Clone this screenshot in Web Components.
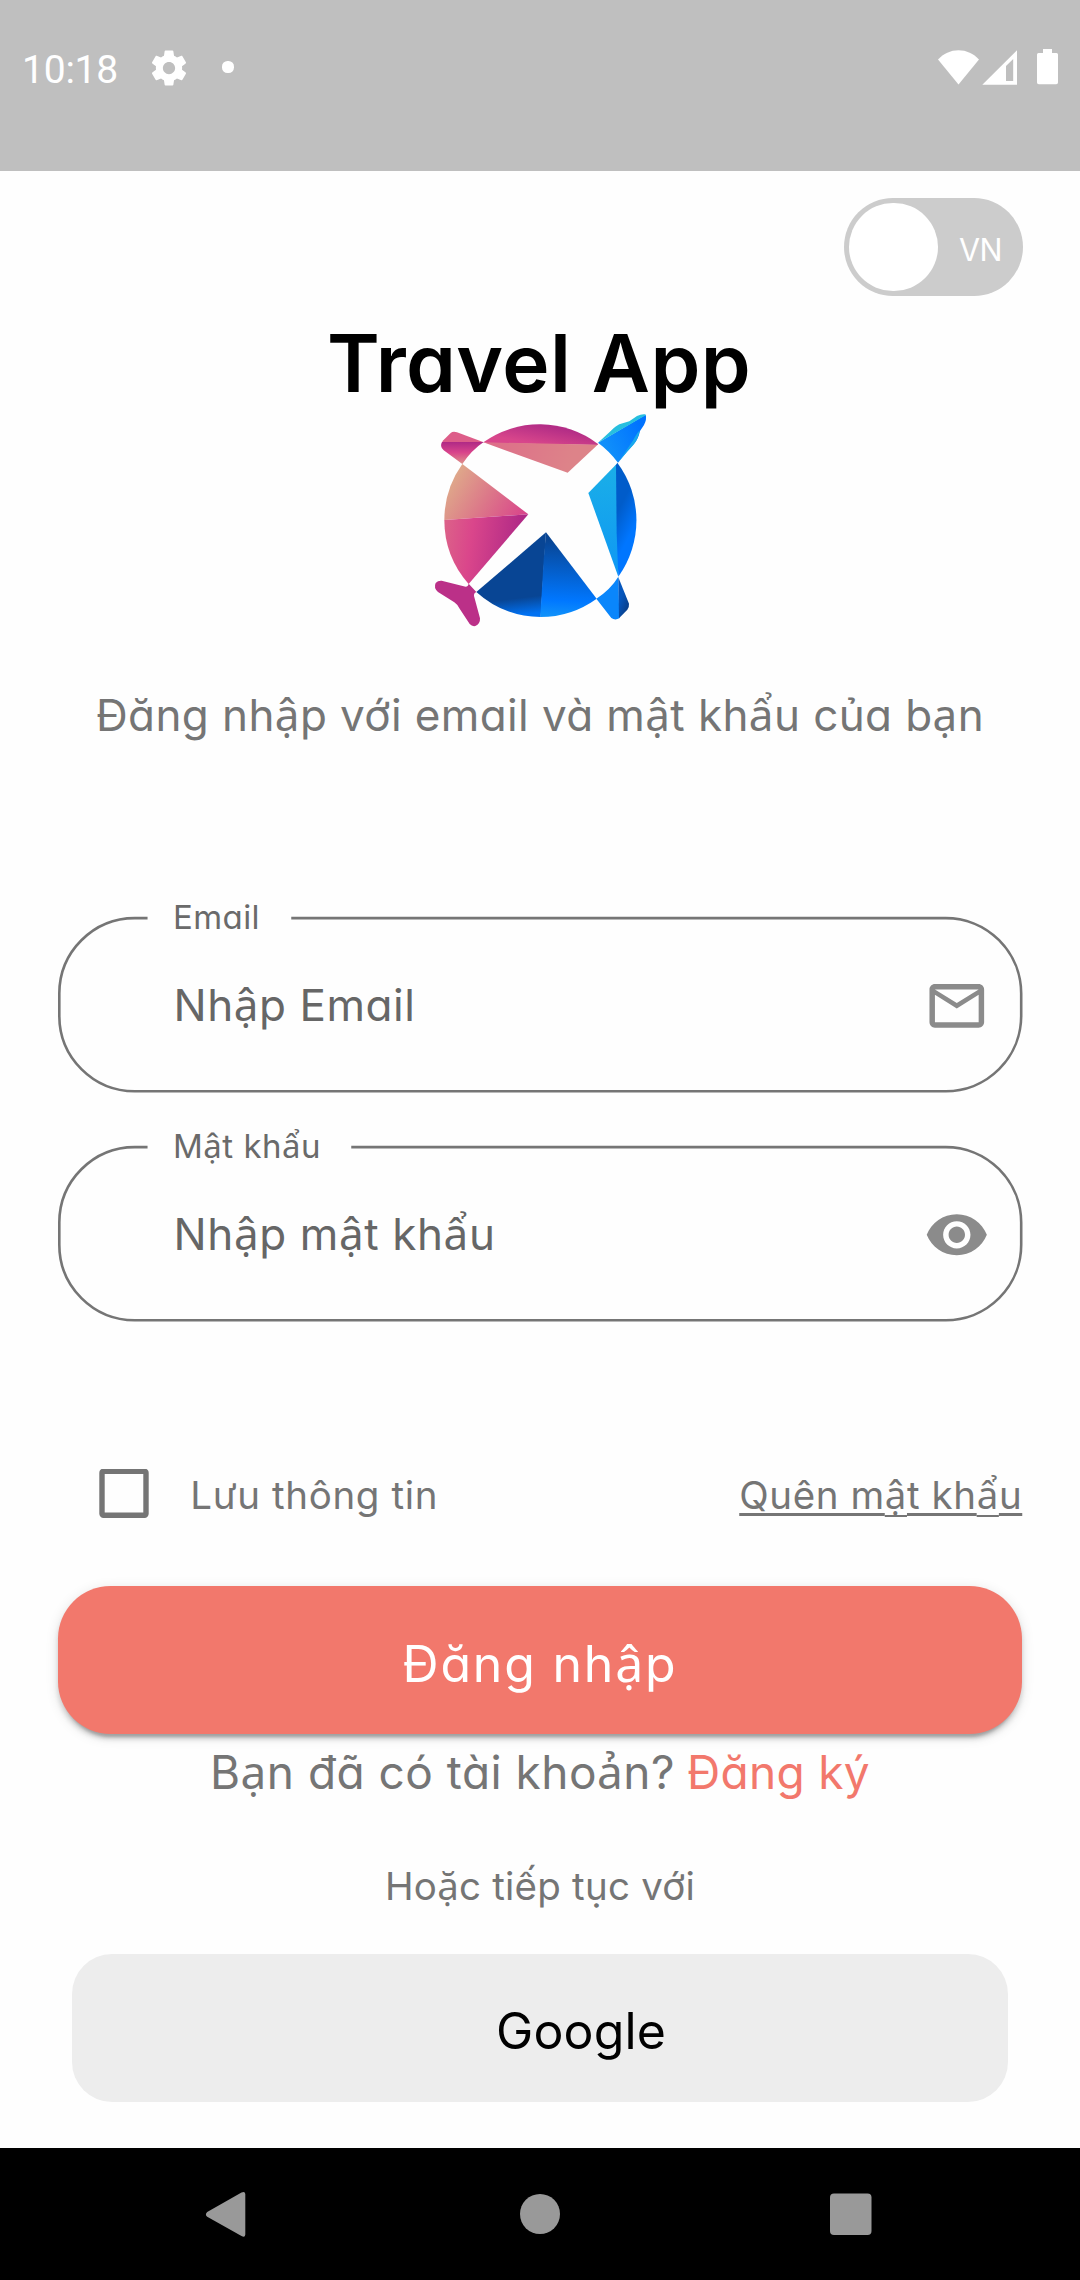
<!DOCTYPE html>
<html lang="vi">
<head>
<meta charset="utf-8">
<title>Travel App</title>
<style>
html,body{margin:0;padding:0}
body{background:#fefefe;font-family:Inter,"Noto Sans",sans-serif;color:#757575;overflow:hidden}
</style>
</head>
<body>
<login-screen></login-screen>
<script>
const define = (name, html, init) => {
  const t = document.createElement('template');
  t.innerHTML = html;
  customElements.define(name, class extends HTMLElement {
    connectedCallback() {
      if (this.shadowRoot) return;
      const root = this.attachShadow({ mode: 'open' });
      root.appendChild(t.content.cloneNode(true));
      if (init) init(this, root);
    }
  });
};

/* A single line of type, tracked so that its advance equals the "w" attribute. */
define('app-text', `
<style>
:host{display:block;flex:none;white-space:nowrap;line-height:1.36}
.line{display:inline-block;white-space:pre;font-feature-settings:"cv11" 1;font-kerning:normal}
.alt{font-family:"Noto Sans",sans-serif;line-height:0}
:host([underline]) .line{text-decoration:underline;text-decoration-thickness:2.6px;text-underline-offset:4px;text-decoration-skip-ink:none}
:host([underline]) .alt{display:inline-block;text-decoration:underline;text-decoration-thickness:2px;text-underline-offset:6px;text-decoration-skip-ink:none}
</style><span class="line"></span>`, (el, root) => {
  const line = root.querySelector('.line');
  const text = el.getAttribute('text');
  for (const part of text.split(/([ậẩạảặ])/)) {
    if (/^[ậẩạảặ]$/.test(part)) {
      const s = document.createElement('span');
      s.className = 'alt';
      s.textContent = part;
      line.append(s);
    } else line.append(part);
  }
  const w = parseFloat(el.getAttribute('w'));
  const gap = (w - line.getBoundingClientRect().width) / text.length;
  line.style.letterSpacing = gap.toFixed(3) + 'px';
});

define('status-bar', `
<style>
:host{display:flex;flex:none;height:171px;box-sizing:border-box;padding:37px 20px 0 22px;background:#bfbfbf;color:#fff;align-items:flex-start}
.time{font:39px/60px Roboto,sans-serif;padding-top:3px;width:120px}
svg{display:block;flex:none}
.gear{margin:9.5px 0 0 5.500px}
.dot{width:12px;height:12px;border-radius:5.5px;background:#fff;margin:24px 0 0 32px}
.sys{margin-left:auto;margin-top:9px}
</style>
<app-text class="time" text="10:18" w="96"></app-text>
<svg class="gear" width="42" height="42" viewBox="0 0 24 24" fill="#fff"><path d="M19.43 12.98c.04-.32.07-.64.07-.98s-.03-.66-.07-.98l2.11-1.65c.19-.15.24-.42.12-.64l-2-3.46c-.12-.22-.39-.3-.61-.22l-2.49 1c-.52-.4-1.08-.73-1.69-.98l-.38-2.65C14.46 2.18 14.25 2 14 2h-4c-.25 0-.46.18-.49.42l-.38 2.65c-.61.25-1.17.59-1.69.98l-2.49-1c-.23-.09-.49 0-.61.22l-2 3.46c-.13.22-.07.49.12.64l2.11 1.65c-.04.32-.07.65-.07.98s.03.66.07.98l-2.11 1.65c-.19.15-.24.42-.12.64l2 3.46c.12.22.39.3.61.22l2.49-1c.52.4 1.08.73 1.69.98l.38 2.65c.03.24.24.42.49.42h4c.25 0 .46-.18.49-.42l.38-2.65c.61-.25 1.17-.59 1.69-.98l2.49 1c.23.09.49 0 .61-.22l2-3.46c.12-.22.07-.49-.12-.64l-2.11-1.65zM12 15.5c-1.93 0-3.5-1.57-3.5-3.5s1.57-3.5 3.5-3.5 3.5 1.57 3.5 3.5-1.57 3.5-3.5 3.5z"/></svg>
<div class="dot"></div>
<svg class="sys" width="124" height="42" viewBox="936 46 124 42" fill="#fff">
<path d="M958.5 84.4L938 59.4C943.5 53.6 950.5 50.2 958.5 50.2S973.500 53.600 979 59.400Z"/>
<path fill-rule="evenodd" d="M982.300 84.700L1017 50.300V84.700ZM1006 81H1013.200V59L1006 66Z"/>
<path d="M1043 49H1052V53H1056.500Q1058 53 1058 54.500V82.500Q1058 84.300 1056.200 84.300H1038.800Q1037 84.300 1037 82.500V54.500Q1037 53 1038.500 53H1043Z"/>
</svg>`);

define('lang-switch', `
<style>
:host{display:flex;flex:none;width:179px;height:98px;box-sizing:border-box;padding:4.8px 21px 0 5.500px;border-radius:49px;background:#ccc;color:#fff;justify-content:space-between;align-items:flex-start}
i{display:block;width:88.500px;height:88.500px;border-radius:50%;background:#fff}
app-text{font-size:30.500px;line-height:94px}
</style><i></i><app-text text="VN" w="43"></app-text>`);

define('travel-logo', `
<style>:host{display:block;flex:none;width:240px;height:240px}svg{display:block}</style>
<svg width="240" height="240" viewBox="0 0 720 720">
<defs>
<linearGradient id="a" gradientUnits="userSpaceOnUse" x1="360" y1="75" x2="350" y2="132"><stop stop-color="#b32d86"/><stop offset="1" stop-color="#d8468b"/></linearGradient>
<linearGradient id="b" gradientUnits="userSpaceOnUse" x1="85" y1="240" x2="300" y2="370"><stop stop-color="#dfab8a"/><stop offset=".5" stop-color="#dc7889"/><stop offset="1" stop-color="#d9448b"/></linearGradient>
<linearGradient id="c" gradientUnits="userSpaceOnUse" x1="75" y1="400" x2="300" y2="430"><stop stop-color="#dc6089"/><stop offset=".35" stop-color="#da468b"/><stop offset="1" stop-color="#b02986"/></linearGradient>
<linearGradient id="d" gradientUnits="userSpaceOnUse" x1="290" y1="595" x2="296" y2="645"><stop stop-color="#084594"/><stop offset="1" stop-color="#0071f2"/></linearGradient>
<linearGradient id="e" gradientUnits="userSpaceOnUse" x1="400" y1="420" x2="390" y2="645"><stop stop-color="#084594"/><stop offset=".8" stop-color="#0077ff"/><stop offset="1" stop-color="#0f90fa"/></linearGradient>
<linearGradient id="f" gradientUnits="userSpaceOnUse" x1="570" y1="210" x2="570" y2="490"><stop stop-color="#1aaee8"/><stop offset="1" stop-color="#109af2"/></linearGradient>
<linearGradient id="g" gradientUnits="userSpaceOnUse" x1="590" y1="340" x2="648" y2="370"><stop stop-color="#005cca"/><stop offset="1" stop-color="#0076ff"/></linearGradient>
<linearGradient id="h" gradientUnits="userSpaceOnUse" x1="130" y1="127" x2="130" y2="188"><stop stop-color="#b02a86"/><stop offset=".5" stop-color="#d9448b"/><stop offset="1" stop-color="#dd8a89"/></linearGradient>
<linearGradient id="i" gradientUnits="userSpaceOnUse" x1="550" y1="120" x2="660" y2="70"><stop stop-color="#108ffa"/><stop offset="1" stop-color="#0072ff"/></linearGradient>
<linearGradient id="j" gradientUnits="userSpaceOnUse" x1="600" y1="600" x2="628" y2="610"><stop stop-color="#0556bd"/><stop offset="1" stop-color="#09408c"/></linearGradient>
<linearGradient id="k" gradientUnits="userSpaceOnUse" x1="230" y1="130" x2="440" y2="210"><stop stop-color="#dd7089"/><stop offset="1" stop-color="#dd8389"/></linearGradient>
</defs>
<path fill="url(#a)" d="M190 127A290 290 0 0 1 534 132L533 135L200 129Z"/>
<path fill="url(#k)" d="M190 127L533 134L443 218Z"/>
<path fill="url(#b)" d="M127 192L325 343L73 360A290 290 0 0 1 127 192Z"/>
<path fill="url(#c)" d="M325 343L146 552A290 290 0 0 1 73 360Z"/>
<path fill="url(#d)" d="M378 397L362 651A290 290 0 0 1 169 576Z"/>
<path fill="url(#e)" d="M378 397L530 596A290 290 0 0 1 361 651L371 480Z"/>
<path fill="url(#f)" d="M592 190L505 279L595 530Z"/>
<path fill="url(#g)" d="M592 188A290 290 0 0 1 595 530L590 400L588 196Z"/>
<path fill="url(#i)" d="M534 128L677 44Q681 57 672 75L660 93Q655 116 643 130Q636 138 594 188Q568 153 534 128Z"/>
<path fill="#27bfdf" d="M534 128L573 92Q589 77 598 73L628 64L651 48Q665 41 676 43L677 46L576 104Z"/>
<path fill="#18a8ec" d="M594 188L640 120Q652 98 659 91Q656 113 645 128Q637 139 620 156Z"/>
<path fill="#dd5d89" d="M191 127L111 97Q99 93 92 99L70 121L66 127Z"/>
<path fill="url(#h)" d="M66 126H191Q154 151 127 192L71 151Q58 140 66 126Z"/>
<path fill="#bb3088" d="M65 542L137 560Q144 560 146 551L169 576Q161 579 162 588L180 655Q181 672 166 678Q156 680 149 672L118 625Q112 613 103 607L54 576Q40 564 47 549Q54 541 65 542Z"/>
<path fill="#0a86fb" d="M595 530L598 655Q585 662 574 654L529 596Q571 569 595 530Z"/>
<path fill="url(#j)" d="M595 532L627 611Q628 621 622 629L597 655Z"/>
</svg>`);

define('text-field', `
<style>
:host{display:grid;flex:none;height:178px}
.outline,.label,.body{grid-area:1/1}
.outline{display:block;width:964.500px;height:178px;overflow:visible}
.body{display:flex;align-items:center;padding:2px 32.750px 0 115.750px;justify-content:space-between;color:#666}
.body app-text{font-size:44px}
.body ::slotted(*){margin-top:-1px}
.label{font-size:33px;line-height:40px;height:40px;margin:-19px 0 0 115.250px;color:#6a6a6a;font-weight:370}
</style>
<svg class="outline" viewBox="57.75 916 964.5 178" fill="none" stroke="#757575" stroke-width="2.6"><path/></svg>
<div class="body"><slot></slot></div>`, (el, root) => {
  const gap = el.getAttribute('gap');
  root.querySelector('path').setAttribute('d', `M147.300 918.100H134.500A75.500 75.500 0 0 0 59.060 993.600V1015.800A75.500 75.500 0 0 0 134.500 1091.300H945.400A75.500 75.500 0 0 0 1020.940 1015.800V993.600A75.500 75.500 0 0 0 945.400 918.100H${gap}`);
  const line = k => {
    const t = document.createElement('app-text');
    t.className = k;
    t.setAttribute('text', el.getAttribute(k));
    t.setAttribute('w', el.getAttribute(k + '-w'));
    return t;
  };
  const body = root.querySelector('.body');
  body.before(line('label'));
  body.prepend(line('hint'));
});

define('field-icon', `
<style>:host{display:block;width:65.600px;height:65.600px}svg{display:block;width:100%;height:100%}</style>
<svg viewBox="0 0 24 24" fill="#8b8b8b"><path/></svg>`, (el, root) => {
  root.querySelector('path').setAttribute('d', {
    mail: 'M22 6c0-1.100-.9-2-2-2H4c-1.100 0-2 .9-2 2v12c0 1.100.9 2 2 2h16c1.100 0 2-.9 2-2V6zm-2 0l-8 5-8-5h16zm0 12H4V8l8 5 8-5v10z',
    eye: 'M12 4.500C7 4.500 2.730 7.610 1 12c1.730 4.390 6 7.500 11 7.500s9.270-3.110 11-7.500c-1.730-4.390-6-7.500-11-7.500zM12 17c-2.760 0-5-2.240-5-5s2.240-5 5-5 5 2.240 5 5-2.240 5-5 5zm0-8c-1.660 0-3 1.340-3 3s1.340 3 3 3 3-1.340 3-3-1.340-3-3-3z'
  }[el.getAttribute('name')]);
});

define('check-option', `
<style>
:host{display:flex;align-items:center;padding-left:41px;gap:41.500px}
svg{display:block}
app-text{font-size:38.500px;font-weight:370;padding-top:2px}
</style>
<svg width="50" height="50" viewBox="0 0 50 50"><rect x="3" y="2.300" width="44" height="44" rx="1.500" fill="none" stroke="#757575" stroke-width="5.400"/></svg>
<app-text text="Lưu thông tin" w="248"></app-text>`);

define('app-button', `
<style>
:host{display:flex;flex:none;height:148.300px;box-sizing:border-box;padding-top:8px;justify-content:center;align-items:center;border-radius:52.500px;background:#f2786c;color:#fff;font-size:50px;
box-shadow:0 8px 3px -5px rgba(0,0,0,.2),0 5px 5px rgba(0,0,0,.14),0 3px 13px rgba(0,0,0,.12)}
:host([plain]){margin:0 14px;padding:6px 0 0 82px;border-radius:40px;background:#ededed;color:#000;box-shadow:none}
</style><slot></slot>`);

define('nav-bar', `
<style>:host{display:flex;flex:none;height:132px;margin-top:auto;background:#000;align-items:center;justify-content:space-between;padding:0 208px 0 205px}svg{display:block}.home{margin-left:3px}</style>
<svg width="41" height="48" viewBox="0 0 41 48" fill="#999"><path d="M2.200 22L36.500 2.600Q40 1 40.300 4V44.500Q40 48 36.500 46L2.200 26.800Q-.4 24.500 2.200 22Z"/></svg>
<svg class="home" width="42" height="42" viewBox="0 0 42 42" fill="#999"><circle cx="21" cy="21" r="20"/></svg>
<svg width="42" height="42" viewBox="0 0 42 42" fill="#999"><rect width="41.500" height="41.500" y=".500" rx="4"/></svg>`);

define('login-screen', `
<style>
:host{display:flex;flex-direction:column;width:1080px;height:2280px;background:#fefefe}
main{display:flex;flex-direction:column;padding:0 57.750px}
lang-switch{align-self:flex-end;margin:27px -.7px 0 0}
.title{align-self:center;margin:17px 2px 0 0;font-size:80px;line-height:100px;height:100px;font-weight:640;color:#000}
travel-logo{align-self:center;margin-top:-13px}
.sub{align-self:center;margin-top:45px;font-size:44px;line-height:60px;height:60px}
.row{display:flex;height:60px;margin-top:141.500px;justify-content:space-between;align-items:center}
.row app-text{font-size:38.500px;font-weight:370;padding-top:2px}
.login{margin-top:61.200px}
.signup{display:flex;align-self:center;margin-top:8.300px;height:60px;font-size:46px}
.signup app-text{line-height:60px}
.signup .go{color:#f2786c;margin-left:12px}
.or{align-self:center;margin-top:58.700px;font-size:38.500px;line-height:50px;height:50px;font-weight:370}
.google{margin-top:42.700px}
</style>
<status-bar></status-bar>
<main>
<lang-switch></lang-switch>
<app-text class="title" text="Travel App" w="424"></app-text>
<travel-logo></travel-logo>
<app-text class="sub" text="Đăng nhập với email và mật khẩu của bạn" w="888"></app-text>
<text-field style="margin-top:171px" label="Email" label-w="87" hint="Nhập Email" hint-w="242" gap="291"><field-icon name="mail"></field-icon></text-field>
<text-field style="margin-top:51px" label="Mật khẩu" label-w="148" hint="Nhập mật khẩu" hint-w="322" gap="351"><field-icon name="eye"></field-icon></text-field>
<div class="row"><check-option></check-option><app-text underline text="Quên mật khẩu" w="283"></app-text></div>
<app-button class="login"><app-text text="Đăng nhập" w="275"></app-text></app-button>
<div class="signup"><app-text text="Bạn đã có tài khoản?" w="465"></app-text><app-text class="go" text="Đăng ký" w="183"></app-text></div>
<app-text class="or" text="Hoặc tiếp tục với" w="310"></app-text>
<app-button plain class="google"><app-text text="Google" w="170"></app-text></app-button>
</main>
<nav-bar></nav-bar>`);
</script>
</body>
</html>
